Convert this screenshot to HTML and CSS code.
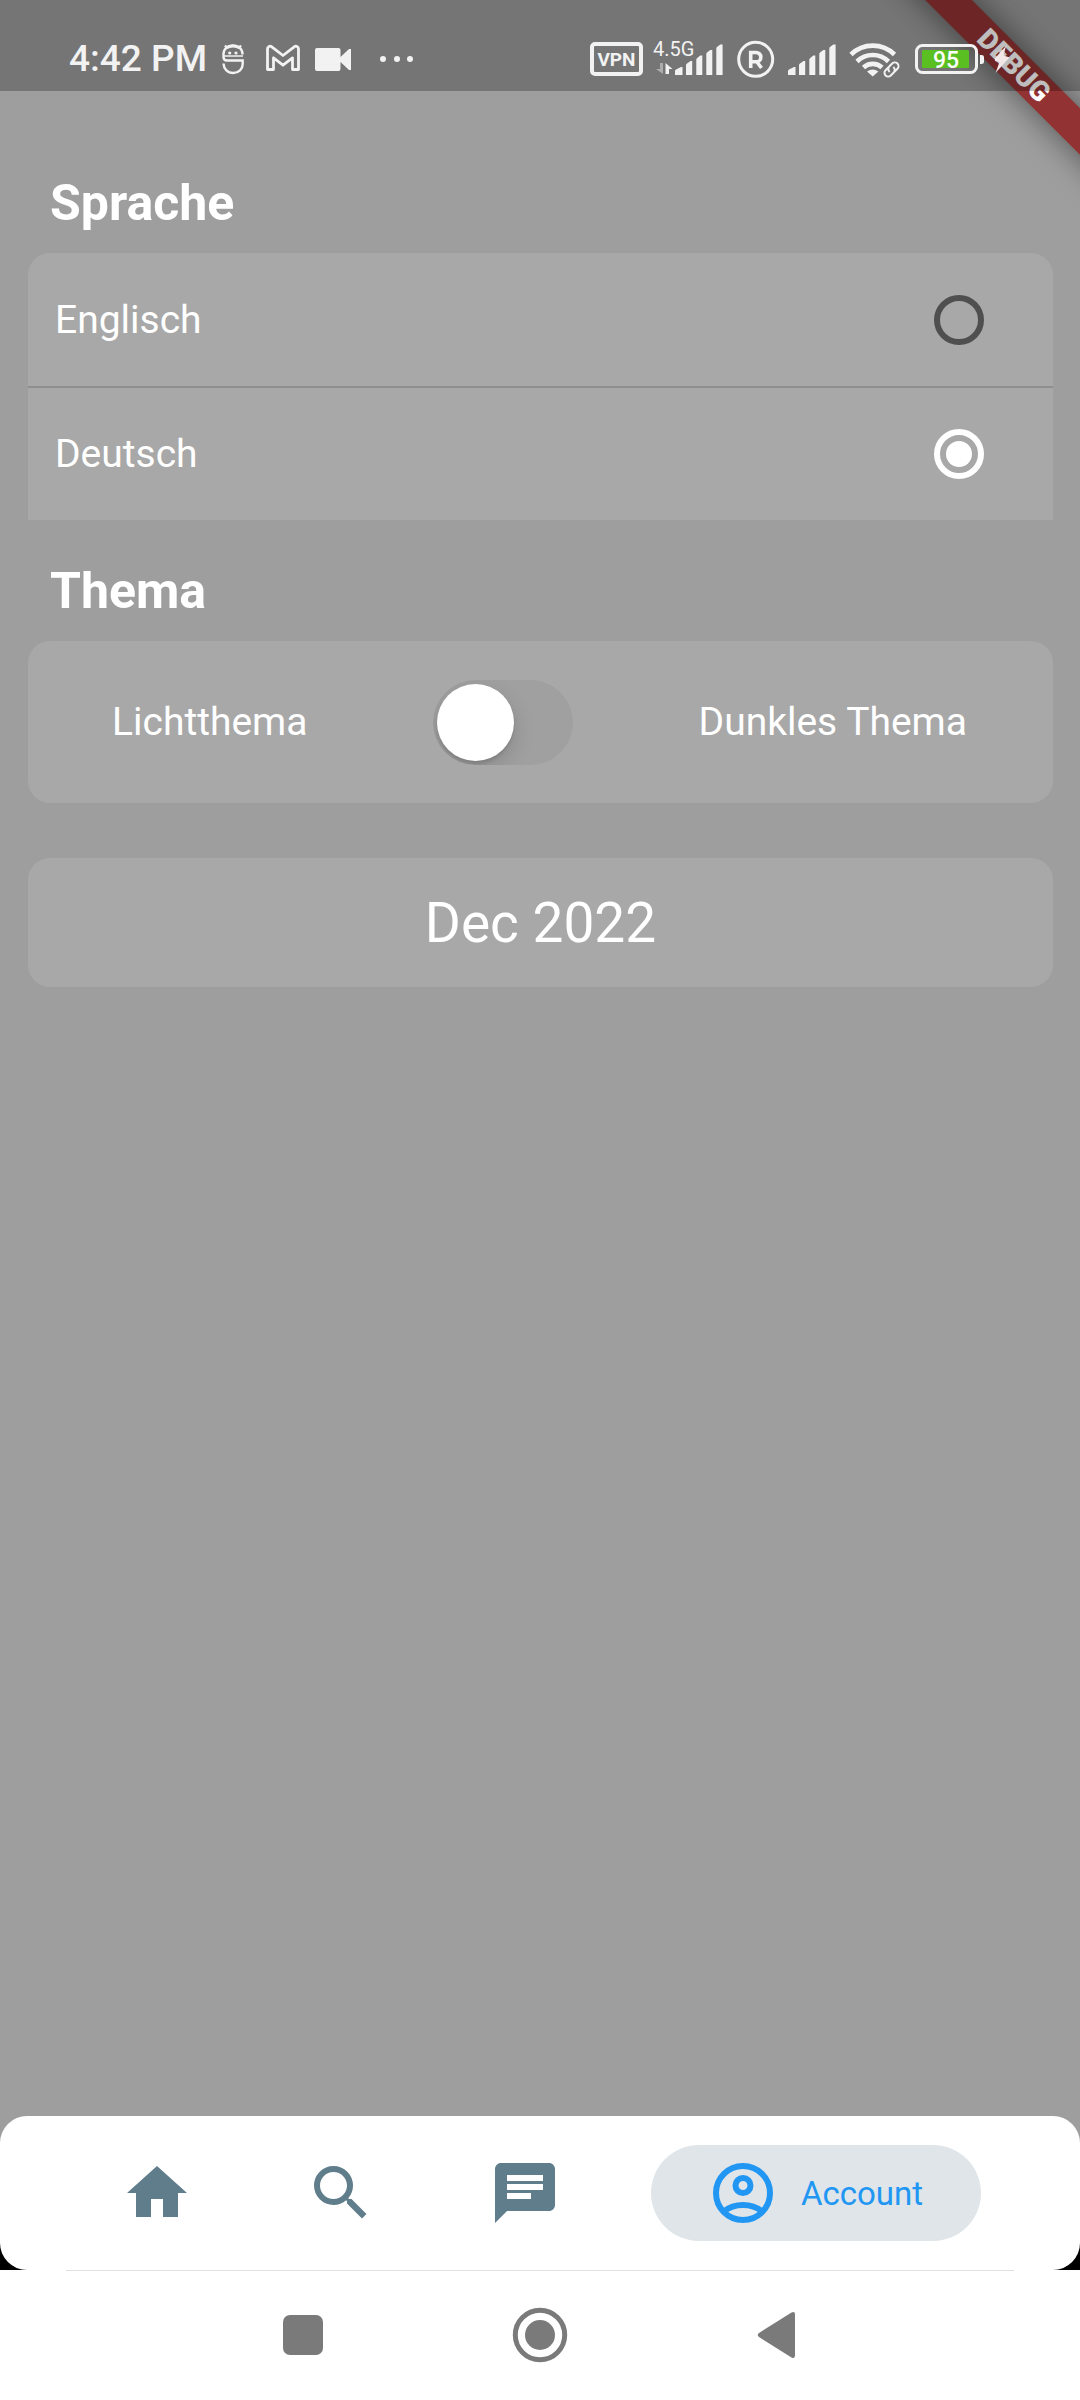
FILE: index.html
```html
<!DOCTYPE html>
<html lang="de">
<head>
<meta charset="utf-8">
<meta name="viewport" content="width=device-width, initial-scale=1">
<title>Einstellungen</title>
<link rel="stylesheet" href="styles.css">
</head>
<body>
<div class="app">
  <div class="banner-clip"><div class="banner">DEBUG</div></div>

  <header class="status">
    <div class="status-group">
      <span class="clock">4:42 PM</span>
      <svg width="28" height="38" viewBox="216 40 28 38" fill="none" stroke="#f2f2f2" stroke-width="2.4" aria-hidden="true">
        <path d="M222.500 57V54c0-5 4-8.500 9.500-8.500s9.500 3.500 9.500 8.500v.5M222.500 57c0 2 1 3.500 3.500 3.500h15.700v3.500c0 5-4 9-9.500 9s-9.500-4-9.700-9.500M224 45.500l2 2.200M240 45.500l-2 2.200"/>
        <path d="M222 56h20" stroke-width="1.500"/>
        <path d="M225 48q7-4 14 0" stroke-width="3"/>
        <circle cx="228.700" cy="53" r="1.600" fill="#f2f2f2" stroke="none"/><circle cx="235" cy="53" r="1.600" fill="#f2f2f2" stroke="none"/>
      </svg>
      <svg width="48" height="38" viewBox="254 40 48 38" fill="none" stroke="#f2f2f2" stroke-width="2.8" stroke-linejoin="round" aria-hidden="true">
        <path d="M266.500 69.500V49c0-2.500 2.500-3.500 4.300-2.200L282 55.500l11.200-8.700c1.800-1.300 4.300-.3 4.300 2.200v20.500h-6V57.800L282 65.200l-9.500-7.400v11.700z"/>
      </svg>
      <svg width="40" height="38" viewBox="312 40 40 38" fill="#f2f2f2" aria-hidden="true">
        <path d="M316 48h21.500a2 2 0 0 1 2 2v7l8.500-8h2v21h-2l-8.500-8v7a2 2 0 0 1-2 2H316a2 2 0 0 1-2-2V50a2 2 0 0 1 2-2z"/>
      </svg>
      <svg width="50" height="38" viewBox="362 40 50 38" fill="#f2f2f2" aria-hidden="true">
        <circle cx="382" cy="59" r="3"/><circle cx="396" cy="59" r="3"/><circle cx="409" cy="59" r="3"/>
      </svg>
    </div>
    <div class="status-group">
      <span class="vpn">VPN</span>
      <svg class="signal" width="71" height="38" viewBox="654 40 71 38" fill="#f2f2f2">
        <text class="net" x="654" y="56">4.5G</text>
        <path d="M664 63v11l-7-5h4v-6z" opacity=".45"/><path d="M666.500 74V63l7 6h-3.500v5z"/>
        <path d="M676 75v-4q0-1 1-1.500l5-2.500h1.500v8zM687 75V65q0-1 1-1.500l3.500-2.500h1.700v14zM697.300 75V59.500q0-1 1-1.600l3-2.400h2v19.500zM707.300 75V54q0-1 1-1.700l3-2.300h2v25zM717.300 75V48.500q0-1 1-1.700l3-2.300h2.300v30.500z"/>
      </svg>
      <svg width="43" height="38" viewBox="735 40 43 38" fill="none" stroke="#f2f2f2" aria-hidden="true">
        <circle cx="756.700" cy="59.300" r="17" stroke-width="3"/>
        <path d="M751.700 68V52.500h5.500a4.500 4.500 0 0 1 0 9.300h-5.500M758 62l4.500 6" stroke-width="3.600"/>
      </svg>
      <svg width="50" height="38" viewBox="788 40 50 38" fill="#f2f2f2" aria-hidden="true">
        <path d="M789 75v-4q0-1 1-1.500l5-2.500h1.500v8zM800 75V65q0-1 1-1.500l3.500-2.500h1.700v14zM810.300 75V59.500q0-1 1-1.600l3-2.400h2v19.500zM820.300 75V54q0-1 1-1.700l3-2.300h2v25zM830.300 75V48.500q0-1 1-1.700l3-2.300h2.300v30.500z"/>
      </svg>
      <svg width="54" height="38" viewBox="848 40 54 38" fill="none" stroke="#f2f2f2" aria-hidden="true">
        <path d="M852 54.500a31 31 0 0 1 43.500 0M858 61.500a22.500 22.500 0 0 1 31.500 0M864.500 67.500a13.500 13.500 0 0 1 18.500 0" stroke-width="4.600"/>
        <path d="M868 71.500q5.700-4 11.400 0L873.700 76.500z" fill="#f2f2f2" stroke="none"/>
        <g stroke-width="2" transform="rotate(-45 892.500 69.500)"><path d="M892 65.800h-4.200a3.700 3.700 0 0 0 0 7.400h4.200a3.700 3.700 0 0 0 3.500-4.200M893 73.200h4.200a3.700 3.700 0 0 0 0-7.400H893a3.700 3.700 0 0 0-3.500 4.200"/></g>
      </svg>
      <svg width="74" height="38" viewBox="912 40 74 38">
        <rect x="917.500" y="45.500" width="60" height="27" rx="6" fill="none" stroke="#f2f2f2" stroke-width="3"/>
        <rect x="923" y="50" width="47" height="18" rx="1" fill="#5abf20"/>
        <path d="M981 55h1.500q2.500 0 2.500 2v5q0 2-2.500 2H981z" fill="#f2f2f2"/>
        <text class="charge" x="947" y="68" text-anchor="middle">95</text>
      </svg>
      <svg width="14" height="38" viewBox="995 40 14 38" fill="#f2e6e6" aria-hidden="true">
        <path d="M1006 46L993 60.500l6.500 1.500-4 11 14-15.500-6-2z"/>
      </svg>
    </div>
  </header>

  <main class="content">
    <h2 class="heading" id="lang">Sprache</h2>
    <div class="card card-list" role="radiogroup" aria-labelledby="lang">
      <label class="row"><span>Englisch</span><input class="radio" type="radio" name="lang"></label>
      <label class="row"><span>Deutsch</span><input class="radio" type="radio" name="lang" checked></label>
    </div>
    <h2 class="heading">Thema</h2>
    <div class="card card-theme">
      <label for="theme">Lichtthema</label>
      <input class="switch" id="theme" type="checkbox" role="switch">
      <label for="theme">Dunkles Thema</label>
    </div>
    <button class="card card-date" type="button">Dec 2022</button>
  </main>

  <div class="tabs-back">
    <nav class="tabs">
      <button class="tab" type="button" aria-label="Home"><svg class="tab-icon" viewBox="0 0 24 24"><path d="M10 20v-6h4v6h5v-8h3L12 3 2 12h3v8z"/></svg></button>
      <button class="tab" type="button" aria-label="Suche"><svg class="tab-icon" viewBox="0 0 24 24"><path d="M15.500 14h-.79l-.28-.27A6.471 6.471 0 0 0 16 9.500 6.500 6.500 0 1 0 9.500 16c1.610 0 3.090-.59 4.230-1.570l.27.28v.79l5 4.990L20.490 19l-4.990-5zm-6 0C7.010 14 5 11.990 5 9.500S7.010 5 9.500 5 14 7.010 14 9.500 11.990 14 9.500 14z"/></svg></button>
      <button class="tab" type="button" aria-label="Chat"><svg class="tab-icon" viewBox="0 0 24 24"><path d="M20 2H4c-1.100 0-1.990.9-1.990 2L2 22l4-4h14c1.100 0 2-.9 2-2V4c0-1.100-.9-2-2-2zM6 9h12v2H6V9zm8 5H6v-2h8v2zm4-6H6V6h12v2z"/></svg></button>
      <button class="tab tab-active" type="button"><svg class="tab-icon" viewBox="0 0 24 24"><g fill="none" stroke="currentColor" stroke-width="2"><circle cx="12" cy="12" r="9"/><circle cx="12" cy="9.500" r="2.500"/><path d="M5.500 18.200C7.300 16.800 9.500 16 12 16s4.700.8 6.500 2.200"/></g></svg>Account</button>
    </nav>
  </div>
  <nav class="system">
    <button class="sys" type="button" aria-label="Übersicht"><svg width="56" height="56" viewBox="0 0 56 56"><rect x="8" y="8" width="40" height="40" rx="7"/></svg></button>
    <button class="sys" type="button" aria-label="Startbildschirm"><svg width="56" height="56" viewBox="0 0 56 56"><circle cx="28" cy="28" r="15"/><circle cx="28" cy="28" r="24.700" fill="none" stroke="currentColor" stroke-width="5"/></svg></button>
    <button class="sys" type="button" aria-label="Zurück"><svg width="56" height="56" viewBox="0 0 56 56"><path d="M10 26L42.500 5.600Q46 4 46 7.500v41Q46 52 42.500 50.400L10 30Q7.500 28 10 26z"/></svg></button>
  </nav>
</div>
</body>
</html>
```
FILE: styles.css
```css
* { box-sizing: border-box; }

body {
  margin: 0;
  font-family: Roboto, "Liberation Sans", sans-serif;
  font-size: 39px;
  color: #fff;
}

button {
  border: 0;
  background: none;
  font: inherit;
  color: inherit;
  padding: 0;
}

svg { display: block; flex: none; }

.app {
  position: relative;
  display: flex;
  flex-direction: column;
  min-height: 100vh;
  background: #9e9e9e;
}

/* corner ribbon, lies below the translucent status bar */
.banner-clip {
  position: absolute;
  top: 0;
  right: 0;
  width: 240px;
  height: 240px;
  overflow: hidden;
}

.banner {
  position: absolute;
  top: 49px;
  right: -94px;
  width: 320px;
  height: 33px;
  transform: rotate(45deg);
  background: #933232;
  box-shadow: 0 0 32px rgba(0, 0, 0, 0.5);
  font-size: 28px;
  font-weight: 900;
  line-height: 33px;
  text-align: center;
}

.status {
  position: relative;
  display: flex;
  justify-content: space-between;
  padding: 40px 71px 13px 69px;
  background: rgba(0, 0, 0, 0.255);
  color: #f2f2f2;
}

.status-group {
  display: flex;
  align-items: center;
  gap: 10px;
  height: 38px;
}

.clock { font-size: 37px; font-weight: 500; line-height: 40px; }

.vpn {
  width: 53px;
  height: 34px;
  border: 4px solid #f2f2f2;
  border-radius: 5px;
  font-size: 19px;
  font-weight: 700;
  line-height: 27px;
  text-align: center;
}

.signal { overflow: visible; }
.net { font-size: 20px; }
.charge { font-size: 23px; font-weight: 500; fill: #fff; }

.content {
  flex: 1;
  display: flex;
  flex-direction: column;
  padding: 82px 27px 0 28px;
}

.heading {
  margin: 0;
  padding: 0 22px;
  font-size: 50px;
  font-weight: 700;
  line-height: 60px;
}

.card {
  margin-top: 20px;
  border-radius: 22px;
  background: #a8a8a8;
}

.card-list {
  margin-bottom: 41px;
  border-radius: 22px 22px 0 0;
}

.row {
  display: flex;
  align-items: center;
  justify-content: space-between;
  height: 133px;
  padding: 0 69px 0 27px;
}

.row + .row {
  height: 134px;
  border-top: 2px solid #8e8e8e;
}

.radio {
  appearance: none;
  display: grid;
  place-items: center;
  width: 50px;
  height: 50px;
  margin: 0;
  border: 6px solid #4f4f4f;
  border-radius: 50%;
}

.radio:checked { border-color: #fff; }

.radio:checked::before {
  content: "";
  width: 26px;
  height: 26px;
  border-radius: 50%;
  background: #fff;
}

.card-theme {
  display: flex;
  align-items: center;
  justify-content: space-between;
  height: 162px;
  padding: 0 86px 0 84px;
}

.switch {
  appearance: none;
  width: 140px;
  height: 85px;
  margin: 0;
  padding: 4px;
  border-radius: 43px;
  background: #a0a0a0;
  overflow: hidden;
}

.switch::before {
  content: "";
  display: block;
  width: 77px;
  height: 77px;
  border-radius: 50%;
  background: #fff;
  box-shadow: 0 8px 22px rgba(0, 0, 0, 0.15), 0 3px 3px rgba(0, 0, 0, 0.1);
}

.switch:checked::before { margin-left: auto; }

.card-date {
  height: 129px;
  margin-top: 55px;
  font-size: 55px;
}

.tabs-back { background: linear-gradient(#9e9e9e 50%, #000 50%); }

.tabs {
  display: flex;
  align-items: center;
  height: 154px;
  padding: 0 99px 0 65px;
  border-radius: 27px;
  background: #fff;
  color: #607d8b;
}

.tab {
  display: flex;
  align-items: center;
  gap: 22px;
  height: 96px;
  padding: 0 56px;
  border-radius: 48px;
}

.tab-active {
  margin-left: auto;
  padding-right: 58px;
  background: #dfe5e8;
  color: #2196f3;
  font-size: 33px;
}

.tab-icon { width: 72px; height: 72px; fill: currentColor; }

.system {
  display: grid;
  grid-template-columns: repeat(3, 237px);
  justify-content: center;
  height: 130px;
  background: linear-gradient(#e0e0e0, #e0e0e0) center top / calc(100% - 132px) 1px no-repeat #fff;
  color: #7a7a7a;
}

.sys { display: grid; place-items: center; }
.sys svg { fill: currentColor; }
```
